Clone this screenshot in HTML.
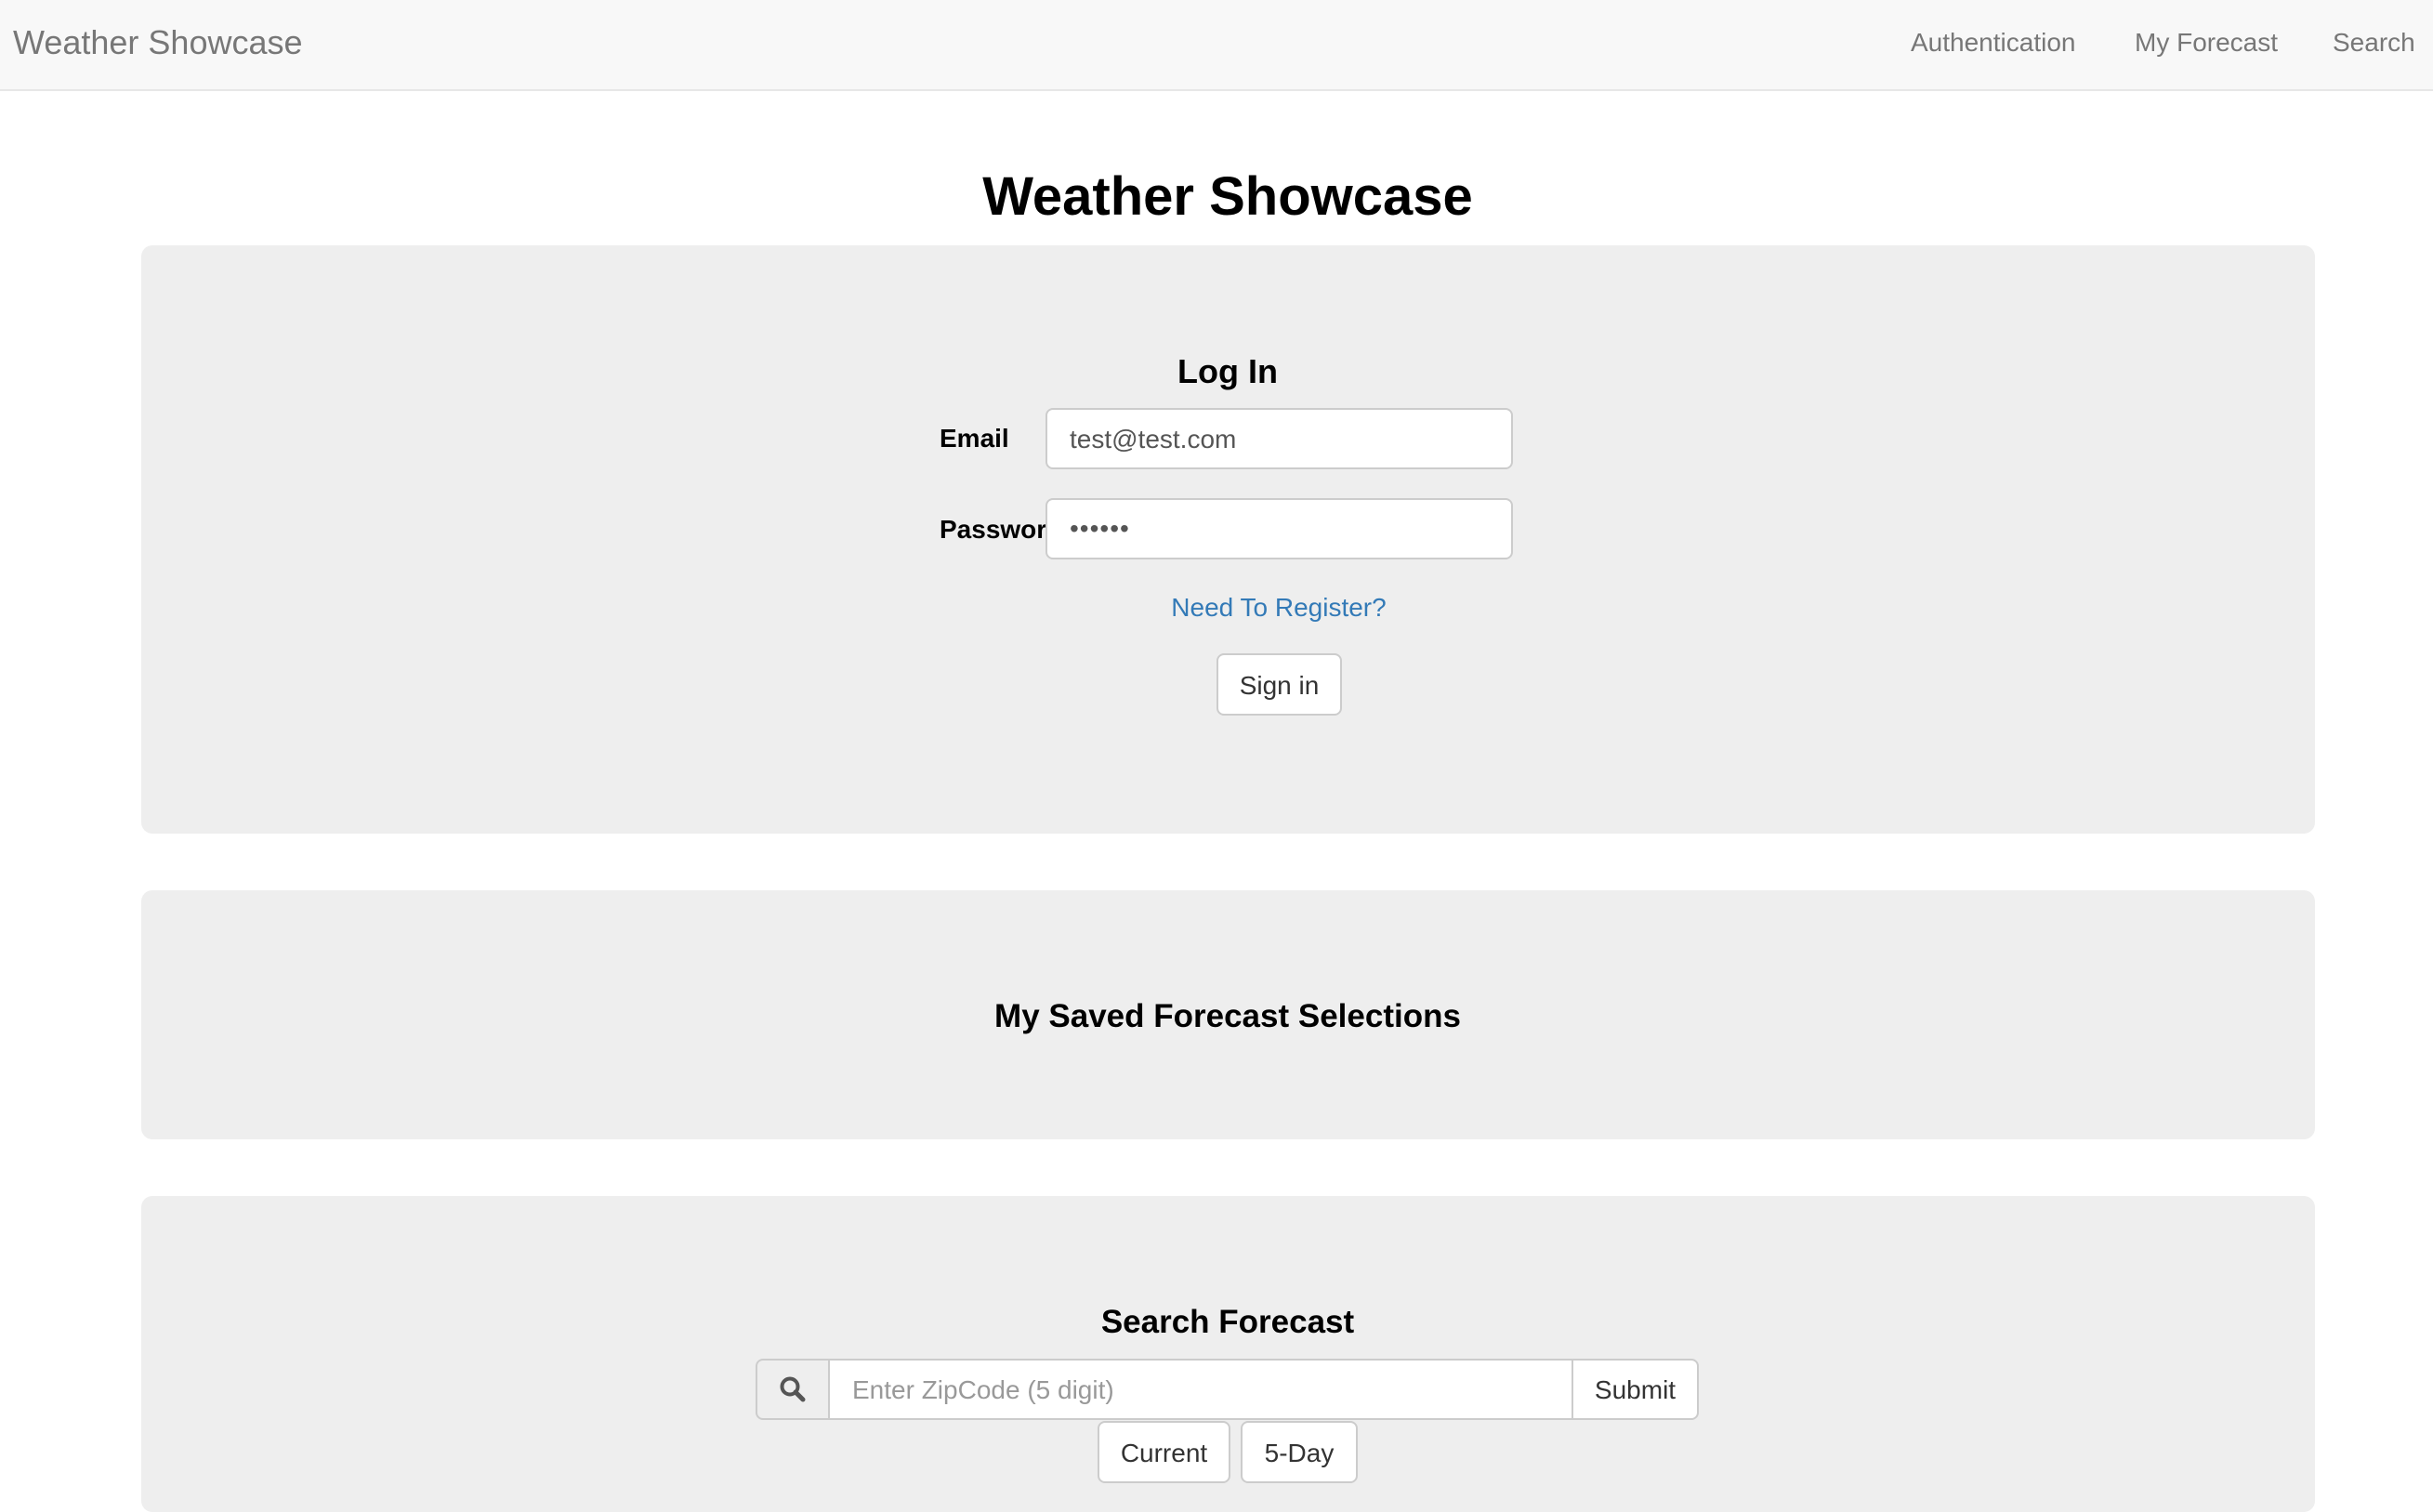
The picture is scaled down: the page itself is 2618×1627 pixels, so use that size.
<!DOCTYPE html>
<html><head><meta charset="utf-8"><style>
*{box-sizing:border-box;margin:0;padding:0}
body{width:2618px;height:1602px;overflow:hidden;background:#fff;font-family:"Liberation Sans",Arial,sans-serif;color:#333;position:relative}
.a{position:absolute}
.nav{left:0;top:0;width:2618px;height:98px;background:#f8f8f8;border-bottom:2px solid #e7e7e7}
.nt{color:#777;font-size:28px;line-height:32px;top:30px}
.c{text-align:center;color:#000;font-weight:bold}
.j{background:#eee;border-radius:12px;left:152px;width:2339px}
.inp{background:#fff;border:2px solid #ccc;border-radius:8px;font-size:28px;color:#555;padding-left:24px;display:flex;align-items:center}
.btn{background:#fff;border:2px solid #ccc;border-radius:8px;font-size:28px;color:#333;display:flex;align-items:center;justify-content:center}
.lbl{font-size:28px;font-weight:bold;color:#000;line-height:32px;overflow:hidden;white-space:nowrap}
</style></head><body>
<div class="a nav"></div>
<div class="a" style="left:14px;top:25px;font-size:36px;line-height:42px;color:#777">Weather Showcase</div>
<div class="a nt" style="left:2056px">Authentication</div>
<div class="a nt" style="left:2297px">My Forecast</div>
<div class="a nt" style="left:2510px">Search</div>

<div class="a c" style="left:0;width:2642px;top:176px;font-size:58px;line-height:72px">Weather Showcase</div>

<div class="a j" style="top:264px;height:633px"></div>
<div class="a c" style="left:0;width:2642px;top:379px;font-size:36px;line-height:42px">Log In</div>
<div class="a lbl" style="left:1011px;top:456px;width:114px">Email</div>
<div class="a inp" style="left:1125px;top:439px;width:503px;height:66px;padding-top:2px">test@test.com</div>
<div class="a lbl" style="left:1011px;top:554px;width:114px">Password</div>
<div class="a inp" style="left:1125px;top:536px;width:503px;height:66px;letter-spacing:1px">••••••</div>
<div class="a" style="left:1126px;width:500px;text-align:center;top:638px;font-size:28px;line-height:32px;color:#337ab7">Need To Register?</div>
<div class="a btn" style="left:1309px;top:703px;width:135px;height:67px;padding-top:2px">Sign in</div>

<div class="a j" style="top:958px;height:268px"></div>
<div class="a c" style="left:0;width:2642px;top:1073px;font-size:35px;line-height:42px">My Saved Forecast Selections</div>

<div class="a j" style="top:1287px;height:340px"></div>
<div class="a c" style="left:0;width:2642px;top:1402px;font-size:35px;line-height:42px">Search Forecast</div>
<div class="a" style="left:813px;top:1462px;width:80px;height:66px;background:#eee;border:2px solid #ccc;border-radius:8px 0 0 8px;display:flex;align-items:center;justify-content:center">
<svg width="30" height="30" viewBox="0 0 30 30"><circle cx="12" cy="12" r="8.5" fill="none" stroke="#555" stroke-width="4"/><path d="M18 18L26 26" stroke="#555" stroke-width="5" stroke-linecap="round"/></svg></div>
<div class="a inp" style="left:891px;top:1462px;width:802px;height:66px;border-radius:0;color:#999;padding-top:2px">Enter ZipCode (5 digit)</div>
<div class="a btn" style="left:1691px;top:1462px;width:137px;height:66px;border-radius:0 8px 8px 0;padding-top:2px">Submit</div>
<div class="a btn" style="left:1181px;top:1529px;width:143px;height:67px;padding-top:2px">Current</div>
<div class="a btn" style="left:1335px;top:1529px;width:126px;height:67px;padding-top:2px">5-Day</div>
</body></html>
